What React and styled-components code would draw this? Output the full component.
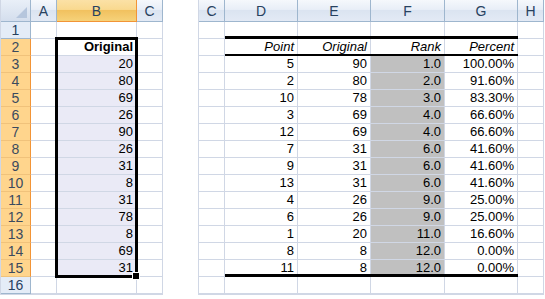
import React from 'react';
import styled, { createGlobalStyle, css } from 'styled-components';

const GlobalStyle = createGlobalStyle`
  body {
    margin: 0;
    background: #ffffff;
    font-family: "Liberation Sans", Arial, sans-serif;
  }
`;

const leftData = [20, 80, 69, 26, 90, 26, 31, 8, 31, 78, 8, 69, 31];

const rankData = [
  [5, 90, '1.0', '100.00%'],
  [2, 80, '2.0', '91.60%'],
  [10, 78, '3.0', '83.30%'],
  [3, 69, '4.0', '66.60%'],
  [12, 69, '4.0', '66.60%'],
  [7, 31, '6.0', '41.60%'],
  [9, 31, '6.0', '41.60%'],
  [13, 31, '6.0', '41.60%'],
  [4, 26, '9.0', '25.00%'],
  [6, 26, '9.0', '25.00%'],
  [1, 20, '11.0', '16.60%'],
  [8, 8, '12.0', '0.00%'],
  [11, 8, '12.0', '0.00%'],
];

const rows = Array.from({ length: 16 }, (_, i) => i + 1);
const headers = ['Point', 'Original', 'Rank', 'Percent'];

const App = () => {
  return (
    <>
      <GlobalStyle />
      <Page>
        <Sheet $cols="30px 26px 80px 26px">
          <Corner $r={1} $c={1} />
          <ColHead $r={1} $c={2}>A</ColHead>
          <ColHead $r={1} $c={3} $active>B</ColHead>
          <ColHead $r={1} $c={4}>C</ColHead>
          {rows.map((r) => (
            <React.Fragment key={r}>
              <RowHead $r={r + 1} $c={1} $active={r >= 2 && r <= 15}>{r}</RowHead>
              <Cell $r={r + 1} $c={2} />
              <Cell $r={r + 1} $c={3} $selected={r >= 3 && r <= 15} $bold={r === 2}>
                {r === 2 ? 'Original' : r >= 3 && r <= 15 ? leftData[r - 3] : ''}
              </Cell>
              <Cell $r={r + 1} $c={4} />
            </React.Fragment>
          ))}
          <Selection>
            <FillHandle />
          </Selection>
        </Sheet>

        <Sheet $cols="26px 73px 73px 74px 73px 26px">
          {['C', 'D', 'E', 'F', 'G', 'H'].map((l, i) => (
            <ColHead key={l} $r={1} $c={i + 1}>{l}</ColHead>
          ))}
          {rows.map((r) => {
            const data = r >= 3 && r <= 15 ? rankData[r - 3] : null;
            return (
              <React.Fragment key={r}>
                <Cell $r={r + 1} $c={1} />
                {[0, 1, 2, 3].map((k) => (
                  <Cell
                    key={k}
                    $r={r + 1}
                    $c={k + 2}
                    $italic={r === 2}
                    $gray={!!data && k === 2}
                  >
                    {r === 2 ? headers[k] : data ? data[k] : ''}
                  </Cell>
                ))}
                <Cell $r={r + 1} $c={6} />
              </React.Fragment>
            );
          })}
          <Rule $row={3} $weight={3} />
          <Rule $row={4} $weight={2} />
          <Rule $row={17} $weight={3} />
        </Sheet>
      </Page>
    </>
  );
};

const Page = styled.div`
  display: flex;
  gap: 35px;
  align-items: flex-start;
`;

const Sheet = styled.div`
  display: grid;
  grid-template-columns: ${(p) => p.$cols};
  grid-template-rows: 22px repeat(16, 17px);
  border-bottom: 1px solid #d0d7e5;
  border-left: 1px solid #d0d7e5;
`;

const placed = css`
  grid-row: ${(p) => p.$r};
  grid-column: ${(p) => p.$c};
`;

const headBase = css`
  ${placed};
  box-sizing: border-box;
  display: flex;
  align-items: center;
  justify-content: center;
  font-size: 14px;
  color: #27415f;
  border-right: 1px solid #9eb6ce;
  border-bottom: 1px solid #9eb6ce;
`;

const Corner = styled.div`
  ${headBase};
  background: linear-gradient(#e9eff8, #d4deed);
  position: relative;

  &::after {
    content: '';
    position: absolute;
    right: 3px;
    bottom: 3px;
    border-style: solid;
    border-width: 0 0 11px 11px;
    border-color: transparent transparent #b6c6dd transparent;
  }
`;

const ColHead = styled.div`
  ${headBase};
  background: ${(p) =>
    p.$active
      ? 'linear-gradient(#fbe1a6 0%, #f9d98f 45%, #f1c15f 50%, #f6d27a 100%)'
      : 'linear-gradient(#f5f8fc 0%, #e8eef7 45%, #dbe4f1 50%, #e3eaf5 100%)'};
  border-right-color: ${(p) => (p.$active ? '#f29436' : '#9eb6ce')};
  border-bottom-color: ${(p) => (p.$active ? '#f29436' : '#9eb6ce')};
`;

const RowHead = styled.div`
  ${headBase};
  background: ${(p) => (p.$active ? '#ffd58d' : '#e4ecf7')};
  border-right-color: ${(p) => (p.$active ? '#f29436' : '#9eb6ce')};
  border-bottom-color: ${(p) => (p.$active ? '#f0c27b' : '#9eb6ce')};
  color: ${(p) => (p.$active ? '#3b4a5e' : '#27415f')};
`;

const Cell = styled.div`
  ${placed};
  box-sizing: border-box;
  display: flex;
  align-items: flex-end;
  justify-content: flex-end;
  padding: 0 3px 1px 0;
  font-size: 13px;
  line-height: 15px;
  color: #000000;
  border-right: 1px solid #d0d7e5;
  border-bottom: 1px solid #d0d7e5;
  background: ${(p) => (p.$selected ? '#eaeaf6' : p.$gray ? '#c0c0c0' : '#ffffff')};
  font-weight: ${(p) => (p.$bold ? 'bold' : 'normal')};
  font-style: ${(p) => (p.$italic ? 'italic' : 'normal')};
`;

const Selection = styled.div`
  grid-column: 3;
  grid-row: 3 / 17;
  margin: -2px -1px -1px -2px;
  border: 3px solid #000000;
  pointer-events: none;
  position: relative;
`;

const FillHandle = styled.div`
  position: absolute;
  right: -5px;
  bottom: -5px;
  width: 6px;
  height: 6px;
  background: #000000;
  border: 1px solid #ffffff;
`;

const Rule = styled.div`
  grid-column: 2 / 6;
  grid-row: ${(p) => p.$row};
  align-self: start;
  height: ${(p) => p.$weight}px;
  margin-top: ${(p) => -Math.ceil(p.$weight / 2) - 1}px;
  background: #000000;
`;

export default App;
